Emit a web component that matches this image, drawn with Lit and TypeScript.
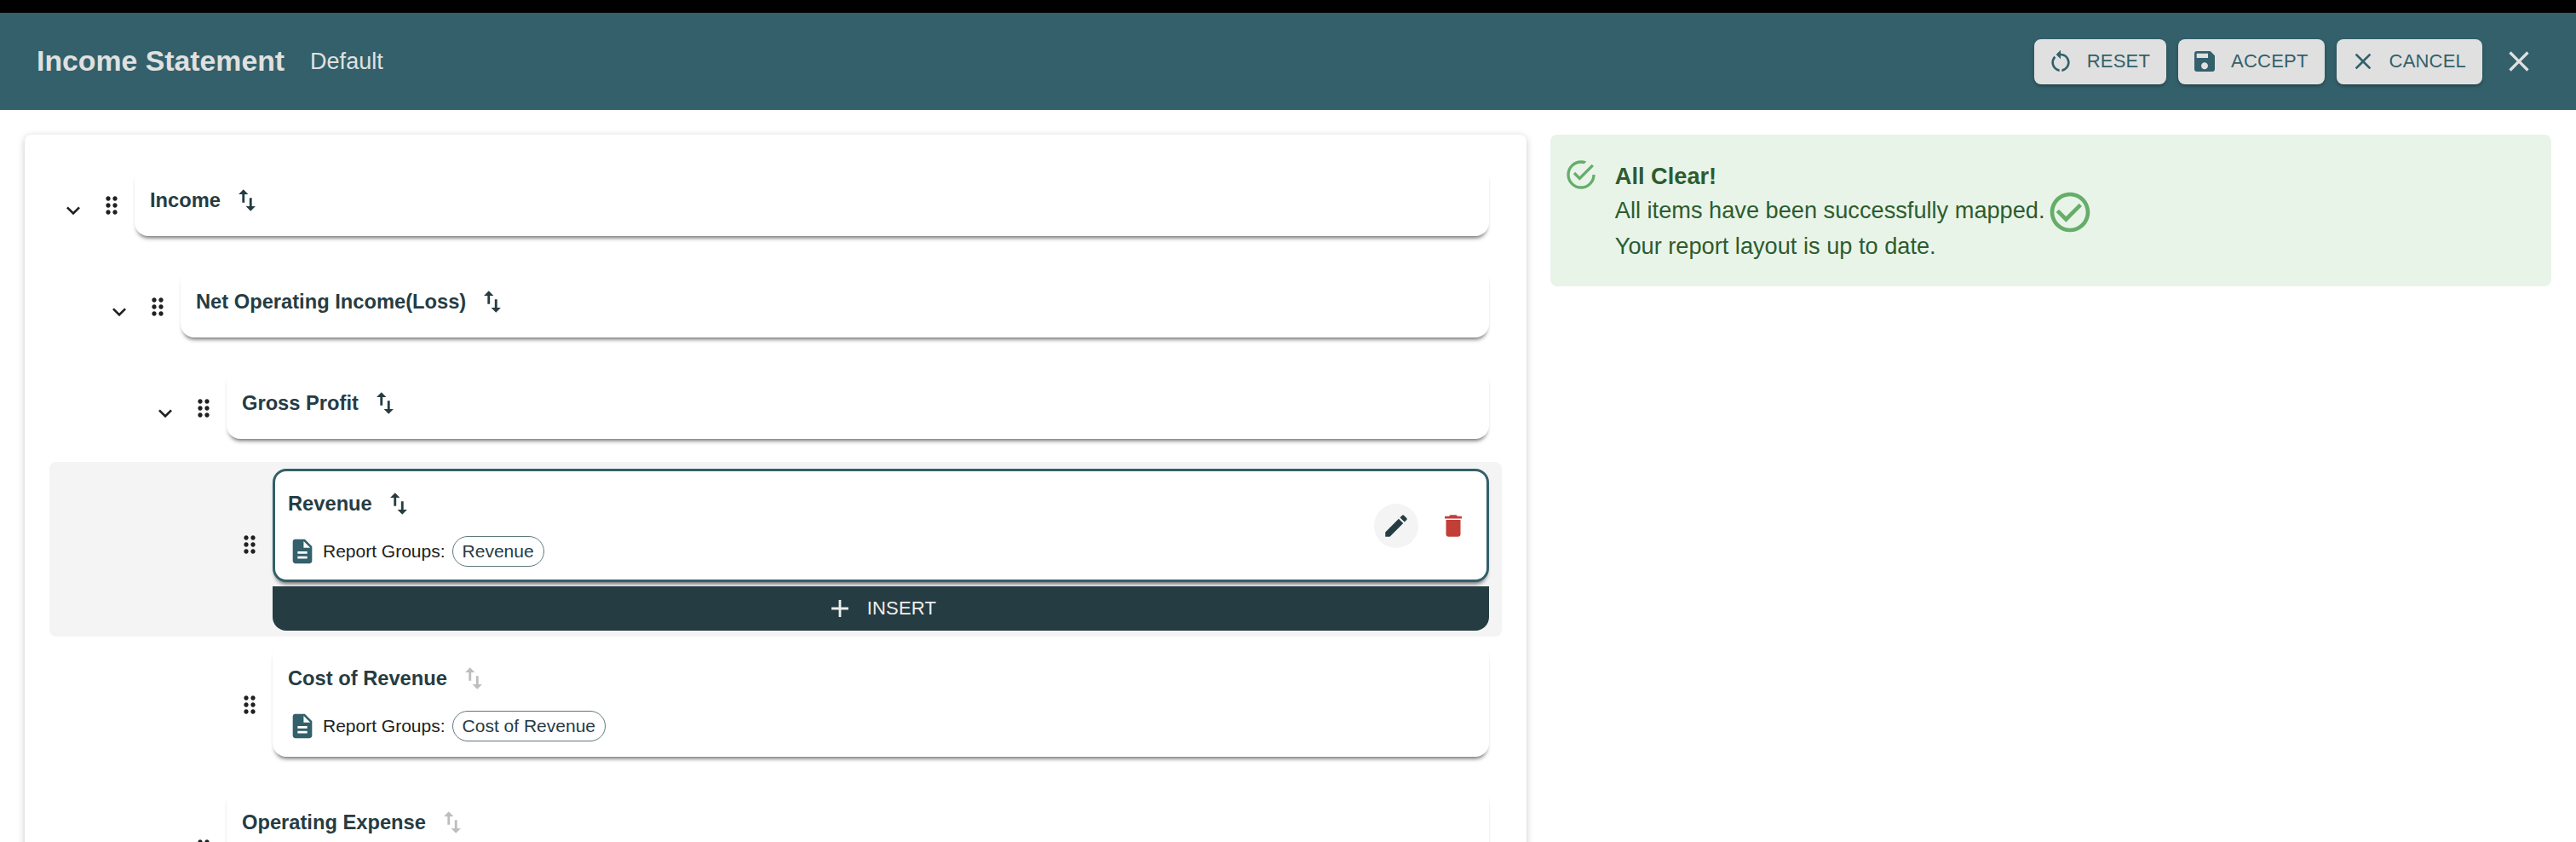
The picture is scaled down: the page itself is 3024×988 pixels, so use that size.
import { LitElement, html, css, svg } from "lit";
import { customElement } from "lit/decorators.js";

const P = {
  down: "M7.41 8.59 12 13.17l4.59-4.58L18 10l-6 6-6-6z",
  drag: "M11 18c0 1.1-.9 2-2 2s-2-.9-2-2 .9-2 2-2 2 .9 2 2zm-2-8c-1.1 0-2 .9-2 2s.9 2 2 2 2-.9 2-2-.9-2-2-2zm0-6c-1.1 0-2 .9-2 2s.9 2 2 2 2-.9 2-2-.9-2-2-2zm6 4c1.1 0 2-.9 2-2s-.9-2-2-2-2 .9-2 2 .9 2 2 2zm0 2c-1.1 0-2 .9-2 2s.9 2 2 2 2-.9 2-2-.9-2-2-2zm0 6c-1.1 0-2 .9-2 2s.9 2 2 2 2-.9 2-2-.9-2-2-2z",
  swap: "M16 17.01V10h-2v7.01h-3L15 21l4-3.99h-3zM9 3 5 6.99h3V14h2V6.99h3L9 3z",
  save: "M17 3H5c-1.11 0-2 .9-2 2v14c0 1.1.89 2 2 2h14c1.1 0 2-.9 2-2V7l-4-4zm-5 16c-1.66 0-3-1.34-3-3s1.34-3 3-3 3 1.34 3 3-1.34 3-3 3zm3-10H5V5h10v4z",
  close: "M19 6.41 17.59 5 12 10.59 6.41 5 5 6.41 10.59 12 5 17.59 6.41 19 12 13.41 17.59 19 19 17.59 13.41 12z",
  reset: "M12 5V2L8 6l4 4V7c3.31 0 6 2.69 6 6 0 2.97-2.17 5.43-5 5.91v2.02c3.95-.49 7-3.85 7-7.93 0-4.42-3.58-8-8-8zm-6 8c0-1.65.67-3.15 1.76-4.24L6.34 7.34C4.9 8.79 4 10.79 4 13c0 4.08 3.05 7.44 7 7.93v-2.02c-2.83-.48-5-2.94-5-5.91z",
  doc: "M14 2H6c-1.1 0-1.99.9-1.99 2L4 20c0 1.1.89 2 1.99 2H18c1.1 0 2-.9 2-2V8l-6-6zm2 16H8v-2h8v2zm0-4H8v-2h8v2zm-3-5V3.5L18.5 9H13z",
  edit: "M3 17.25V21h3.75L17.81 9.94l-3.75-3.75L3 17.25zM20.71 7.04c.39-.39.39-1.02 0-1.41l-2.34-2.34a.9959.9959 0 0 0-1.41 0l-1.83 1.83 3.75 3.75 1.83-1.83z",
  del: "M6 19c0 1.1.9 2 2 2h8c1.1 0 2-.9 2-2V7H6v12zM19 4h-3.5l-1-1h-5l-1 1H5v2h14V4z",
  add: "M19 13h-6v6h-2v-6H5v-2h6V5h2v6h6v2z",
  ok: "M20,12A8,8 0 0,1 12,20A8,8 0 0,1 4,12A8,8 0 0,1 12,4C12.76,4 13.5,4.11 14.2,4.31L15.77,2.74C14.61,2.26 13.34,2 12,2A10,10 0 0,0 2,12A10,10 0 0,0 12,22A10,10 0 0,0 22,12M7.91,10.08L6.5,11.5L11,16L21,6L19.59,4.58L11,13.17L7.91,10.08Z",
  okc: "M16.59 7.58 10 14.17l-3.59-3.58L5 12l5 5 8-8zM12 2C6.48 2 2 6.48 2 12s4.48 10 10 10 10-4.48 10-10S17.52 2 12 2zm0 18c-4.42 0-8-3.58-8-8s3.58-8 8-8 8 3.58 8 8-3.58 8-8 8z",
};

const icon = (d: string, cls = "") =>
  html`<svg class="ic ${cls}" viewBox="0 0 24 24" aria-hidden="true">${svg`<path d=${d}></path>`}</svg>`;

interface Node {
  name: string;
  depth: number;
  chevron?: boolean;
  group?: string;
  tall?: boolean;
  selected?: boolean;
  muted?: boolean;
}

const NODES: Node[] = [
  { name: "Income", depth: 0, chevron: true },
  { name: "Net Operating Income(Loss)", depth: 1, chevron: true },
  { name: "Gross Profit", depth: 2, chevron: true },
  { name: "Revenue", depth: 3, group: "Revenue", tall: true, selected: true },
  { name: "Cost of Revenue", depth: 3, group: "Cost of Revenue", tall: true, muted: true },
  { name: "Operating Expense", depth: 2, tall: true, muted: true },
];

@customElement("app-root")
export class AppRoot extends LitElement {
  static styles = css`
    :host {
      display: block;
      height: 988px;
      overflow: hidden;
      background: #fff;
      font-family: "Liberation Sans", Arial, sans-serif;
      color: #212121;
    }
    .ic { display: block; fill: currentColor; flex: none; width: 32px; height: 32px; }
    .topstrip { height: 15px; background: #000; }
    header {
      height: 114px;
      background: #33606a;
      display: flex;
      align-items: center;
      padding: 0 47px 0 43px;
      color: #e0e0e0;
    }
    h1 { margin: 0; font-size: 33.8px; font-weight: 700; line-height: 1; }
    .variant { font-size: 27px; margin-left: 30px; line-height: 1; }
    .actions { margin-left: auto; display: flex; align-items: center; gap: 14px; }
    button { font-family: inherit; border: 0; cursor: pointer; }
    .btn {
      height: 53px;
      display: flex;
      align-items: center;
      gap: 15px;
      padding: 0 19px 0 15px;
      background: #e0e0e0;
      color: #33606a;
      border-radius: 8px;
      font-size: 22px;
      letter-spacing: 0.2px;
      box-shadow: 0 3px 3px -2px rgba(0,0,0,.25), 0 2px 4px rgba(0,0,0,.2);
    }
    .x {
      background: none;
      color: #e0e0e0;
      width: 40px;
      height: 40px;
      padding: 0;
      margin-left: 9px;
    }
    .x .ic { width: 40px; height: 40px; }
    main {
      display: grid;
      grid-template-columns: 3fr 2fr;
      column-gap: 28px;
      align-items: start;
      padding: 29px;
    }
    .panel {
      background: #fff;
      border-radius: 8px;
      box-shadow: 0 2px 8px rgba(0,0,0,.22);
      padding: 36px 29px 40px;
      min-width: 0;
    }
    .row {
      display: flex;
      align-items: center;
      gap: 9px;
      padding-right: 15px;
      margin-bottom: 36px;
      border-radius: 8px;
    }
    .row.selected {
      background: #f4f4f4;
      padding-top: 8px;
      padding-bottom: 7px;
      margin-top: -9px;
      margin-bottom: 8px;
    }
    .chev { width: 36px; height: 36px; display: flex; align-items: center; justify-content: center; flex: none; margin-top: 22px; color: #212121; }
    .drag { width: 36px; height: 36px; display: flex; align-items: center; justify-content: center; flex: none; margin-top: 10px; color: #212121; }
    .row.selected .drag { margin-top: -12px; }
    .stack { flex: 1; min-width: 0; display: flex; flex-direction: column; gap: 5px; }
    .card {
      box-sizing: border-box;
      background: #fff;
      border-radius: 16px;
      min-height: 83px;
      padding: 0 18px;
      box-shadow: 0 5px 5px -3px rgba(0,0,0,.6), 0 0 1px rgba(0,0,0,.02);
      display: flex;
      align-items: center;
    }
    .card.tall { min-height: 133px; }
    .selected .card { border: 3px solid #33606a; padding: 0 15px; }
    .card-body { flex: 1; min-width: 0; align-self: flex-start; padding-top: 24px; }
    .selected .card-body { padding-top: 21px; }
    .card-title { display: flex; align-items: center; height: 34px; gap: 14px; }
    .card-title .ic { width: 34px; height: 34px; }
    .name { font-size: 23.7px; font-weight: 700; color: #263c43; }
    .swap { color: #263c43; }
    .swap.muted { color: #bdbdbd; }
    .groups { display: flex; align-items: center; margin-top: 21px; font-size: 21px; color: #212121; }
    .groups .ic { color: #33606a; margin-right: 7px; width: 34px; height: 34px; }
    .chip {
      height: 36px;
      box-sizing: border-box;
      border: 1px solid #5f777e;
      border-radius: 18px;
      padding: 0 11px;
      margin-left: 8px;
      display: flex;
      align-items: center;
      color: #263c43;
    }
    .tools { display: flex; align-items: center; gap: 15px; margin-right: -2px; }
    .tool { width: 52px; height: 52px; border-radius: 50%; display: flex; align-items: center; justify-content: center; padding: 0; background: none; }
    .tool .ic { width: 34px; height: 34px; }
    .tool.edit { background: #f4f4f4; color: #263c43; }
    .tool.del { color: #c23f38; }
    .insert {
      height: 52px;
      background: #263c43;
      color: #eeeeee;
      border-radius: 0 0 16px 16px;
      display: flex;
      align-items: center;
      justify-content: center;
      gap: 15px;
      font-size: 22px;
      letter-spacing: 0.2px;
      padding: 0;
    }
    .insert .ic { width: 34px; height: 34px; }
    .alert {
      box-sizing: border-box;
      height: 178px;
      background: #e9f4e9;
      border-radius: 8px;
      padding: 29px 16px;
      display: flex;
      gap: 20px;
      color: #2e5c2e;
      font-size: 27.2px;
      line-height: 40px;
    }
    .alert > .ic { width: 40px; height: 40px; color: #66ad6a; margin-top: -2px; }
    .alert b { display: block; }
    .line { display: block; }
    .inline-ok { display: inline-block; vertical-align: middle; width: 56px; height: 56px; margin: -8px 0 -8px 1px; color: #66ad6a; }
    .inline-ok .ic { width: 56px; height: 56px; }
  `;

  private row(n: Node) {
    const indent = n.depth * 54;
    const card = html`
      <div class="card ${n.tall ? "tall" : ""}">
        <div class="card-body">
          <div class="card-title">
            <span class="name">${n.name}</span>
            ${icon(P.swap, `swap ${n.muted ? "muted" : ""}`)}
          </div>
          ${n.group
            ? html`<div class="groups">${icon(P.doc)}<span>Report Groups:</span><span class="chip">${n.group}</span></div>`
            : ""}
        </div>
        ${n.selected
          ? html`<div class="tools">
              <button class="tool edit">${icon(P.edit)}</button>
              <button class="tool del">${icon(P.del)}</button>
            </div>`
          : ""}
      </div>
    `;
    return html`
      <div class="row ${n.selected ? "selected" : ""}" style="padding-left:${10 + indent}px">
        <div class="chev">${n.chevron ? icon(P.down) : ""}</div>
        <div class="drag">${icon(P.drag)}</div>
        <div class="stack">
          ${card}
          ${n.selected ? html`<button class="insert">${icon(P.add)}<span>INSERT</span></button>` : ""}
        </div>
      </div>
    `;
  }

  render() {
    return html`
      <div class="topstrip"></div>
      <header>
        <h1>Income Statement</h1>
        <span class="variant">Default</span>
        <div class="actions">
          <button class="btn">${icon(P.reset)}<span>RESET</span></button>
          <button class="btn">${icon(P.save)}<span>ACCEPT</span></button>
          <button class="btn">${icon(P.close)}<span>CANCEL</span></button>
          <button class="x">${icon(P.close)}</button>
        </div>
      </header>
      <main>
        <section class="panel">${NODES.map((n) => this.row(n))}</section>
        <aside class="alert">
          ${icon(P.ok)}
          <div>
            <b>All Clear!</b>
            <span class="line">All items have been successfully mapped.<span class="inline-ok">${icon(P.okc)}</span></span>
            <span class="line">Your report layout is up to date.</span>
          </div>
        </aside>
      </main>
    `;
  }
}
